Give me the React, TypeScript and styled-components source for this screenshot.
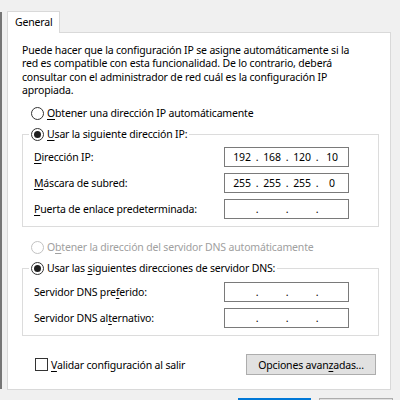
import React from "react";
import styled, { createGlobalStyle } from "styled-components";

const GlobalStyle = createGlobalStyle`
  html, body { margin: 0; padding: 0; background: #f0f0f0; }
  body {
    font-family: "Noto Sans", "Open Sans", sans-serif;
    font-size: 10.5px;
    letter-spacing: -0.17px;
    color: #000;
  }
  * { box-sizing: border-box; }
`;

const Screen = styled.div`
  width: 400px;
  height: 400px;
  overflow: hidden;
  display: flex;
  align-items: flex-start;
  background: #f0f0f0;
`;

const WindowEdge = styled.div`
  flex: none;
  width: 2px;
  height: 377px;
  margin-top: 12px;
  background: #767676;
`;

const Dialog = styled.div`
  flex: 1;
  display: flex;
  flex-direction: column;
  padding: 11px 0 0 5px;
`;

const TabStrip = styled.div`
  display: flex;
  flex: none;
`;

const Tab = styled.div`
  position: relative;
  z-index: 1;
  width: 53px;
  height: 22px;
  margin-bottom: -1px;
  padding-left: 7px;
  line-height: 20px;
  background: #fff;
  border: 1px solid #d9d9d9;
  border-bottom: none;
`;

const Panel = styled.div`
  flex: none;
  width: 384px;
  height: 358px;
  display: flex;
  flex-direction: column;
  padding: 11px 11px 0 14px;
  background: #fff;
  border: 1px solid #d9d9d9;
`;

const Description = styled.p`
  margin: 0;
  line-height: 13.3px;
  white-space: nowrap;
`;

const U = styled.span`
  text-decoration: underline;
  text-underline-offset: 2px;
  text-decoration-thickness: 1px;
`;

const OptionRow = styled.label<{ $disabled?: boolean; $indent?: number; $gap?: number }>`
  display: flex;
  align-items: center;
  gap: 3px;
  height: 16px;
  margin-top: ${(p) => p.$gap ?? 0}px;
  padding-left: ${(p) => p.$indent ?? 0}px;
  color: ${(p) => (p.$disabled ? "#a0a0a0" : "#000")};
  white-space: nowrap;
`;

const RadioDot = styled.span<{ $checked?: boolean; $disabled?: boolean }>`
  flex: none;
  width: 13px;
  height: 13px;
  border-radius: 50%;
  border: 1px solid ${(p) => (p.$disabled ? "#c2c2c2" : "#333")};
  background: #fff;
  display: flex;
  align-items: center;
  justify-content: center;
  &::after {
    content: "";
    display: ${(p) => (p.$checked ? "block" : "none")};
    width: 7px;
    height: 7px;
    border-radius: 50%;
    background: #1f1f1f;
  }
`;

const CheckBox = styled.span`
  flex: none;
  width: 13px;
  height: 13px;
  border: 1px solid #333;
  background: #fff;
`;

const GroupBox = styled.fieldset<{ $gap: number }>`
  margin: ${(p) => p.$gap}px 0 0 0;
  padding: 0;
  min-width: 0;
  border: 1px solid #dcdcdc;
`;

const Legend = styled.legend`
  margin-left: 6px;
  padding: 0 2px;
`;

const GroupBody = styled.div<{ $top: number }>`
  display: grid;
  row-gap: 6px;
  padding: ${(p) => p.$top}px 29px 7px 11px;
`;

const FieldRow = styled.div`
  display: flex;
  align-items: center;
  justify-content: space-between;
  height: 20px;
  white-space: nowrap;
`;

const IpBox = styled.div`
  flex: none;
  width: 125px;
  height: 20px;
  display: flex;
  align-items: center;
  padding-left: 4px;
  background: #fff;
  border: 1px solid #7a7a7a;
`;

const Octet = styled.span`
  width: 26px;
  text-align: center;
`;

const Dot = styled.span`
  width: 4px;
  text-align: center;
`;

const BottomRow = styled.div`
  display: flex;
  align-items: center;
  justify-content: space-between;
  height: 21px;
  margin-top: 18px;
  padding: 0 3px 0 13px;
`;

const Button = styled.button<{ $width: number; $default?: boolean }>`
  flex: none;
  width: ${(p) => p.$width}px;
  height: ${(p) => (p.$default ? 23 : 21)}px;
  padding: 0;
  font: inherit;
  letter-spacing: inherit;
  color: #000;
  background: #e1e1e1;
  border: ${(p) => (p.$default ? "2px solid #0078d7" : "1px solid #adadad")};
`;

const Footer = styled.div`
  flex: none;
  display: flex;
  justify-content: flex-end;
  gap: 8px;
  margin-top: 8px;
  padding-right: 7px;
`;

const IpField = ({ value }: { value?: string[] }) => {
  const parts = value ?? ["", "", "", ""];
  return (
    <IpBox>
      {parts.map((p, i) => (
        <React.Fragment key={i}>
          <Octet>{p}</Octet>
          {i < 3 && <Dot>.</Dot>}
        </React.Fragment>
      ))}
    </IpBox>
  );
};

export default function App() {
  return (
    <>
      <GlobalStyle />
      <Screen>
        <WindowEdge />
        <Dialog>
          <TabStrip>
            <Tab>General</Tab>
          </TabStrip>
          <Panel>
            <Description>
              Puede hacer que la configuración IP se asigne automáticamente si la
              <br />
              red es compatible con esta funcionalidad. De lo contrario, deberá
              <br />
              consultar con el administrador de red cuál es la configuración IP
              <br />
              apropiada.
            </Description>

            <OptionRow $gap={8} $indent={9}>
              <RadioDot />
              <span>
                <U>O</U>btener una dirección IP automáticamente
              </span>
            </OptionRow>

            <GroupBox $gap={5}>
              <Legend>
                <OptionRow>
                  <RadioDot $checked />
                  <span>
                    <U>U</U>sar la siguiente dirección IP:
                  </span>
                </OptionRow>
              </Legend>
              <GroupBody $top={5}>
                <FieldRow>
                  <span>
                    <U>D</U>irección IP:
                  </span>
                  <IpField value={["192", "168", "120", "10"]} />
                </FieldRow>
                <FieldRow>
                  <span>
                    <U>M</U>áscara de subred:
                  </span>
                  <IpField value={["255", "255", "255", "0"]} />
                </FieldRow>
                <FieldRow>
                  <span>
                    <U>P</U>uerta de enlace predeterminada:
                  </span>
                  <IpField />
                </FieldRow>
              </GroupBody>
            </GroupBox>

            <OptionRow $gap={12} $indent={9} $disabled>
              <RadioDot $disabled />
              <span>
                O<U>b</U>tener la dirección del servidor DNS automáticamente
              </span>
            </OptionRow>

            <GroupBox $gap={5}>
              <Legend>
                <OptionRow>
                  <RadioDot $checked />
                  <span>
                    Usar las <U>s</U>iguientes direcciones de servidor DNS:
                  </span>
                </OptionRow>
              </Legend>
              <GroupBody $top={6}>
                <FieldRow>
                  <span>
                    Servidor DNS pre<U>f</U>erido:
                  </span>
                  <IpField />
                </FieldRow>
                <FieldRow>
                  <span>
                    Servidor DNS al<U>t</U>ernativo:
                  </span>
                  <IpField />
                </FieldRow>
              </GroupBody>
            </GroupBox>

            <BottomRow>
              <OptionRow>
                <CheckBox />
                <span>
                  <U>V</U>alidar configuración al salir
                </span>
              </OptionRow>
              <Button $width={130}>
                Opciones avan<U>z</U>adas...
              </Button>
            </BottomRow>
          </Panel>
          <Footer>
            <Button $width={73} $default aria-label="Aceptar" />
            <Button $width={74} aria-label="Cancelar" />
          </Footer>
        </Dialog>
      </Screen>
    </>
  );
}
